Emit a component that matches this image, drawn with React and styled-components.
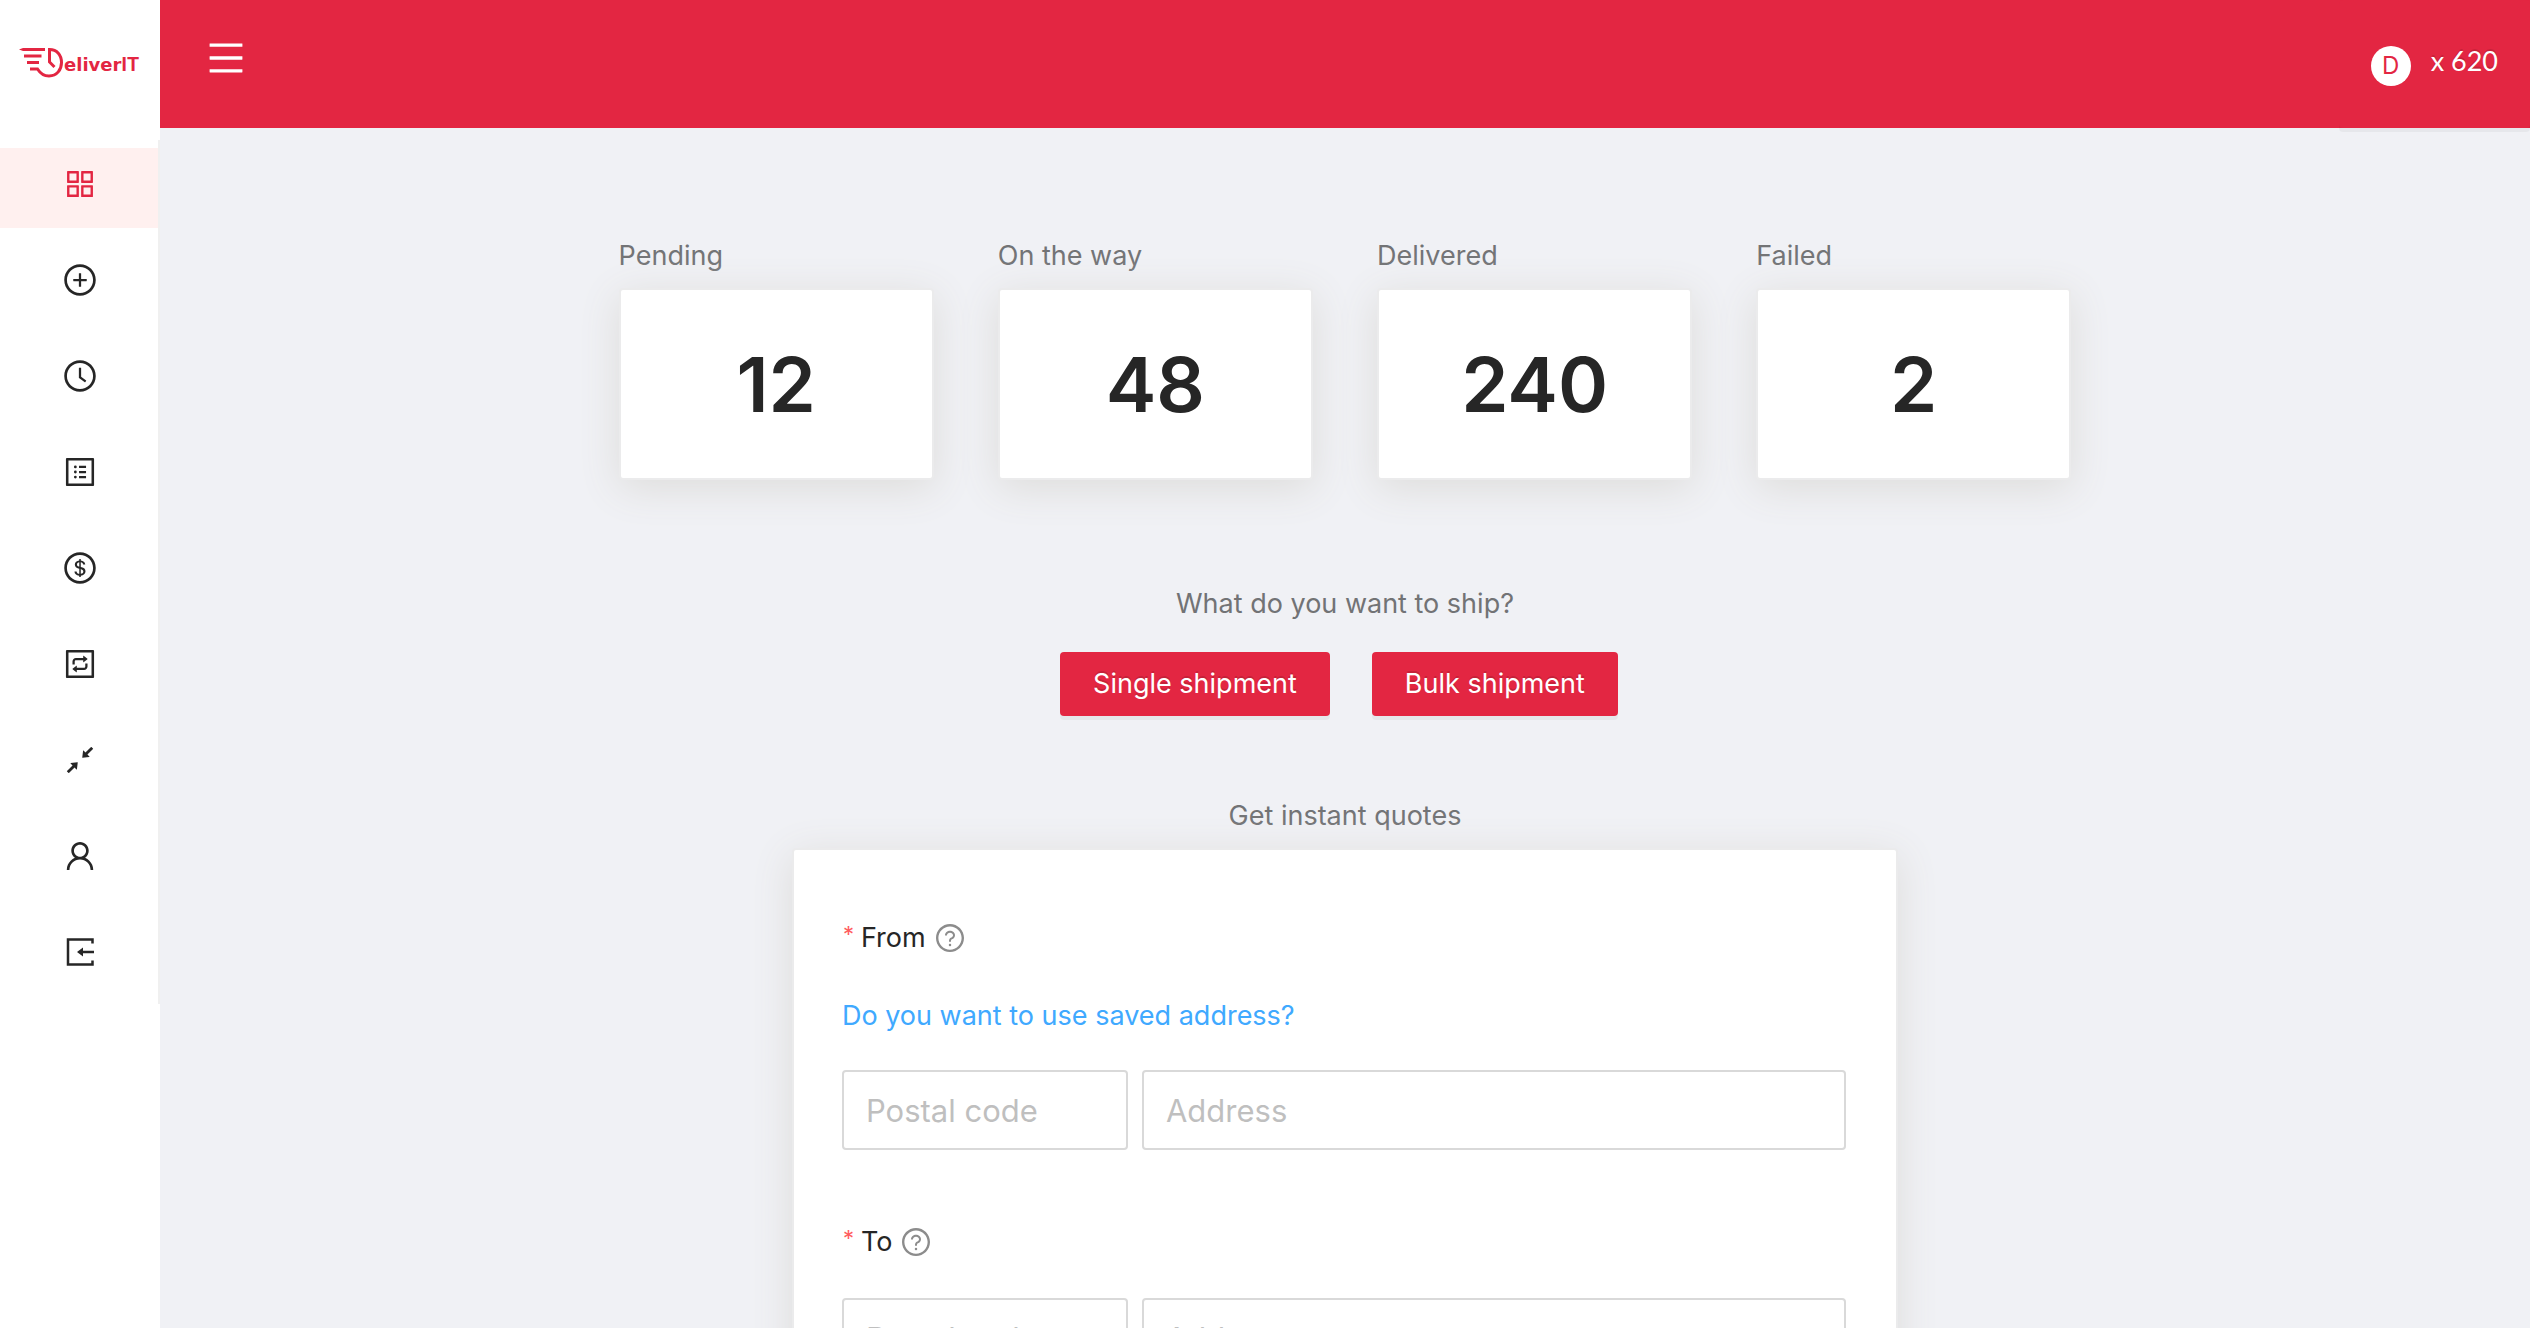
import React from 'react';
import styled, { createGlobalStyle, css } from 'styled-components';
import {
  AiOutlineAppstore,
  AiOutlinePlusCircle,
  AiOutlineClockCircle,
  AiOutlineProfile,
  AiOutlineDollarCircle,
  AiOutlineInteraction,
  AiOutlineShrink,
  AiOutlineUser,
  AiOutlineMenu,
  AiOutlineQuestionCircle,
} from 'react-icons/ai';

const brand = '#e32642';

const GlobalStyle = createGlobalStyle`
  *, *::before, *::after { box-sizing: border-box; }
  body {
    margin: 0;
    background: #f0f1f5;
    color: #262626;
    font-family: Inter, "Liberation Sans", sans-serif;
    font-size: 27px;
    line-height: 44px;
  }
  button, input { font: inherit; }
`;

const Layout = styled.div`
  display: flex;
  height: 100vh;
  overflow: hidden;
`;

const Sidebar = styled.aside`
  flex: 0 0 160px;
  background: #fff;
`;

const LogoLink = styled.a`
  display: flex;
  height: 140px;
  padding: 44px 0 0 18px;
`;

const Menu = styled.nav`
  display: flex;
  flex-direction: column;
  gap: 16px;
  padding: 8px 0;
  border-right: 2px solid #f0f0f0;
`;

const MenuItem = styled.a`
  display: flex;
  align-items: center;
  justify-content: center;
  height: 80px;
  padding: 0 0 8px 2px;
  font-size: 36px;
  color: #262626;
  ${({ $active }) =>
    $active &&
    css`
      background: #fff0ef;
      color: ${brand};
    `}
`;

const Page = styled.div`
  flex: 1;
  min-width: 0;
  display: flex;
  flex-direction: column;
`;

const Header = styled.header`
  flex: 0 0 128px;
  display: flex;
  justify-content: space-between;
  background: ${brand};
`;

const MenuToggle = styled.button`
  display: flex;
  align-items: center;
  padding: 0 45px 12px;
  border: 0;
  background: none;
  color: #fff;
  font-size: 42px;
`;

const Credits = styled.button`
  display: flex;
  align-items: center;
  gap: 20px;
  padding: 0 32px 6px;
  border: 0;
  border-radius: 4px;
  background: ${brand};
  box-shadow: 0 4px 0 rgba(0, 0, 0, 0.04);
  color: #fff;
  font-family: Lato, sans-serif;
  text-shadow: 0 -2px 0 rgba(0, 0, 0, 0.12);
`;

const Coin = styled.span`
  width: 40px;
  margin-top: 10px;
  border-radius: 50%;
  background: #fff;
  color: ${brand};
  font-family: Inter, sans-serif;
  font-size: 24px;
  line-height: 40px;
  text-align: center;
  text-shadow: none;
`;

const Content = styled.main`
  flex: 1;
  min-height: 0;
  overflow: hidden auto;
  scrollbar-width: none;
  display: flex;
  flex-direction: column;
  align-items: center;
  padding-top: 106px;
`;

const Stats = styled.section`
  display: grid;
  grid-template-columns: repeat(4, 1fr);
  width: 64%;
`;

const Stat = styled.div`
  display: flex;
  flex-direction: column;
  gap: 10px;
  padding: 0 32px;
`;

const Caption = styled.h2`
  margin: 0;
  color: #727375;
  font-size: 27px;
  font-weight: 400;
`;

const Card = styled.div`
  border: 2px solid #ebebec;
  border-radius: 4px;
  background: #fff;
  box-shadow: 0 8px 40px #dddcda;
`;

const StatCard = styled(Card)`
  display: flex;
  align-items: center;
  justify-content: center;
  height: 192px;
  font-size: 76px;
  font-weight: 600;
`;

const Ship = styled.section`
  display: flex;
  flex-direction: column;
  align-items: center;
  gap: 26px;
  margin: 102px 0 78px;
`;

const Actions = styled.div`
  display: flex;
  gap: 42px;
  padding-right: 12px;
`;

const Action = styled.button`
  height: 64px;
  padding: 0 33px;
  border: 0;
  border-radius: 4px;
  background: ${brand};
  box-shadow: 0 4px 0 rgba(0, 0, 0, 0.04);
  color: #fff;
  text-shadow: 0 -2px 0 rgba(0, 0, 0, 0.12);
`;

const Quotes = styled.section`
  display: flex;
  flex-direction: column;
  align-items: center;
  gap: 10px;
  width: 100%;
`;

const QuoteCard = styled(Card)`
  display: flex;
  flex-direction: column;
  gap: 70px;
  width: 46.67%;
  padding: 66px 50px 66px 48px;
`;

const Group = styled.fieldset`
  min-width: 0;
  margin: 0;
  padding: 0;
  border: 0;
`;

const GroupLabel = styled.legend`
  display: flex;
  align-items: center;
  padding: 0;
  margin-bottom: 34px;
`;

const Star = styled.span`
  width: 19px;
  padding-left: 1px;
  color: #ff5c5e;
  font-size: 22px;
  line-height: 36px;
  height: 44px;
`;

const Hint = styled.span`
  display: flex;
  margin-left: 8px;
  color: #8c8c8c;
  font-size: 32px;
`;

const SavedLink = styled.a`
  display: block;
  margin-bottom: 32px;
  color: #40a9ff;
  text-decoration: none;
`;

const Fields = styled.div`
  display: grid;
  grid-template-columns: 13fr 32fr;
  gap: 14px;
`;

const Field = styled.input`
  width: 100%;
  min-width: 0;
  height: 80px;
  padding: 0 22px;
  border: 2px solid #d9d9d9;
  border-radius: 4px;
  background: #fff;
  color: #262626;
  font-size: 31px;
  &::placeholder {
    color: #bfbfbf;
    opacity: 1;
  }
`;

function LeaveIcon() {
  return (
    <svg width="36" height="36" viewBox="0 0 36 36" fill="none" stroke="currentColor" strokeWidth="2.5">
      <path d="M30.500 9.500V5.500H6V30.500H30.500V26.500M32 18H20" />
      <path d="M15 18L21 13.500V22.500Z" fill="currentColor" stroke="none" />
    </svg>
  );
}

const menu = [
  ['Dashboard', AiOutlineAppstore],
  ['New shipment', AiOutlinePlusCircle],
  ['History', AiOutlineClockCircle],
  ['Orders', AiOutlineProfile],
  ['Payments', AiOutlineDollarCircle],
  ['Returns', AiOutlineInteraction],
  ['Integrations', AiOutlineShrink],
  ['Account', AiOutlineUser],
  ['Log out', LeaveIcon],
];

const stats = [
  ['Pending', 12],
  ['On the way', 48],
  ['Delivered', 240],
  ['Failed', 2],
];

function Logo() {
  return (
    <svg width="124" height="36" viewBox="0 0 124 36" fill="none" stroke={brand} strokeWidth="3">
      <path d="M1 5.500L5 4H27V7H5Z" fill={brand} stroke="none" />
      <path d="M6 12H23.500M9 18.500H21M12 25H19.500C22 29 26 32 31 32C39 32 43.500 25.500 43.500 18.500C43.500 11 39 5.500 31.500 5.500V18L36.500 23" />
      <text x="46" y="27" fill={brand} stroke="none" fontFamily="DejaVu Sans, sans-serif" fontWeight="700" fontSize="18">
        eliver
        <tspan fontFamily="Inter, sans-serif" fontSize="19">IT</tspan>
      </text>
    </svg>
  );
}

function AddressGroup({ label, saved }) {
  return (
    <Group>
      <GroupLabel>
        <Star>*</Star>
        {label}
        <Hint>
          <AiOutlineQuestionCircle />
        </Hint>
      </GroupLabel>
      {saved && <SavedLink href="#saved">Do you want to use saved address?</SavedLink>}
      <Fields>
        <Field placeholder="Postal code" aria-label={`${label} postal code`} />
        <Field placeholder="Address" aria-label={`${label} address`} />
      </Fields>
    </Group>
  );
}

export default function App() {
  return (
    <Layout>
      <GlobalStyle />
      <Sidebar>
        <LogoLink href="#home">
          <Logo />
        </LogoLink>
        <Menu>
          {menu.map(([name, Icon], i) => (
            <MenuItem key={name} href={`#${i}`} aria-label={name} $active={i === 0}>
              <Icon />
            </MenuItem>
          ))}
        </Menu>
      </Sidebar>
      <Page>
        <Header>
          <MenuToggle aria-label="Toggle menu">
            <AiOutlineMenu />
          </MenuToggle>
          <Credits>
            <Coin>D</Coin>
            <span>x 620</span>
          </Credits>
        </Header>
        <Content>
          <Stats>
            {stats.map(([label, value]) => (
              <Stat key={label}>
                <Caption>{label}</Caption>
                <StatCard>{value}</StatCard>
              </Stat>
            ))}
          </Stats>
          <Ship>
            <Caption>What do you want to ship?</Caption>
            <Actions>
              <Action>Single shipment</Action>
              <Action>Bulk shipment</Action>
            </Actions>
          </Ship>
          <Quotes>
            <Caption>Get instant quotes</Caption>
            <QuoteCard as="form">
              <AddressGroup label="From" saved />
              <AddressGroup label="To" />
            </QuoteCard>
          </Quotes>
        </Content>
      </Page>
    </Layout>
  );
}
